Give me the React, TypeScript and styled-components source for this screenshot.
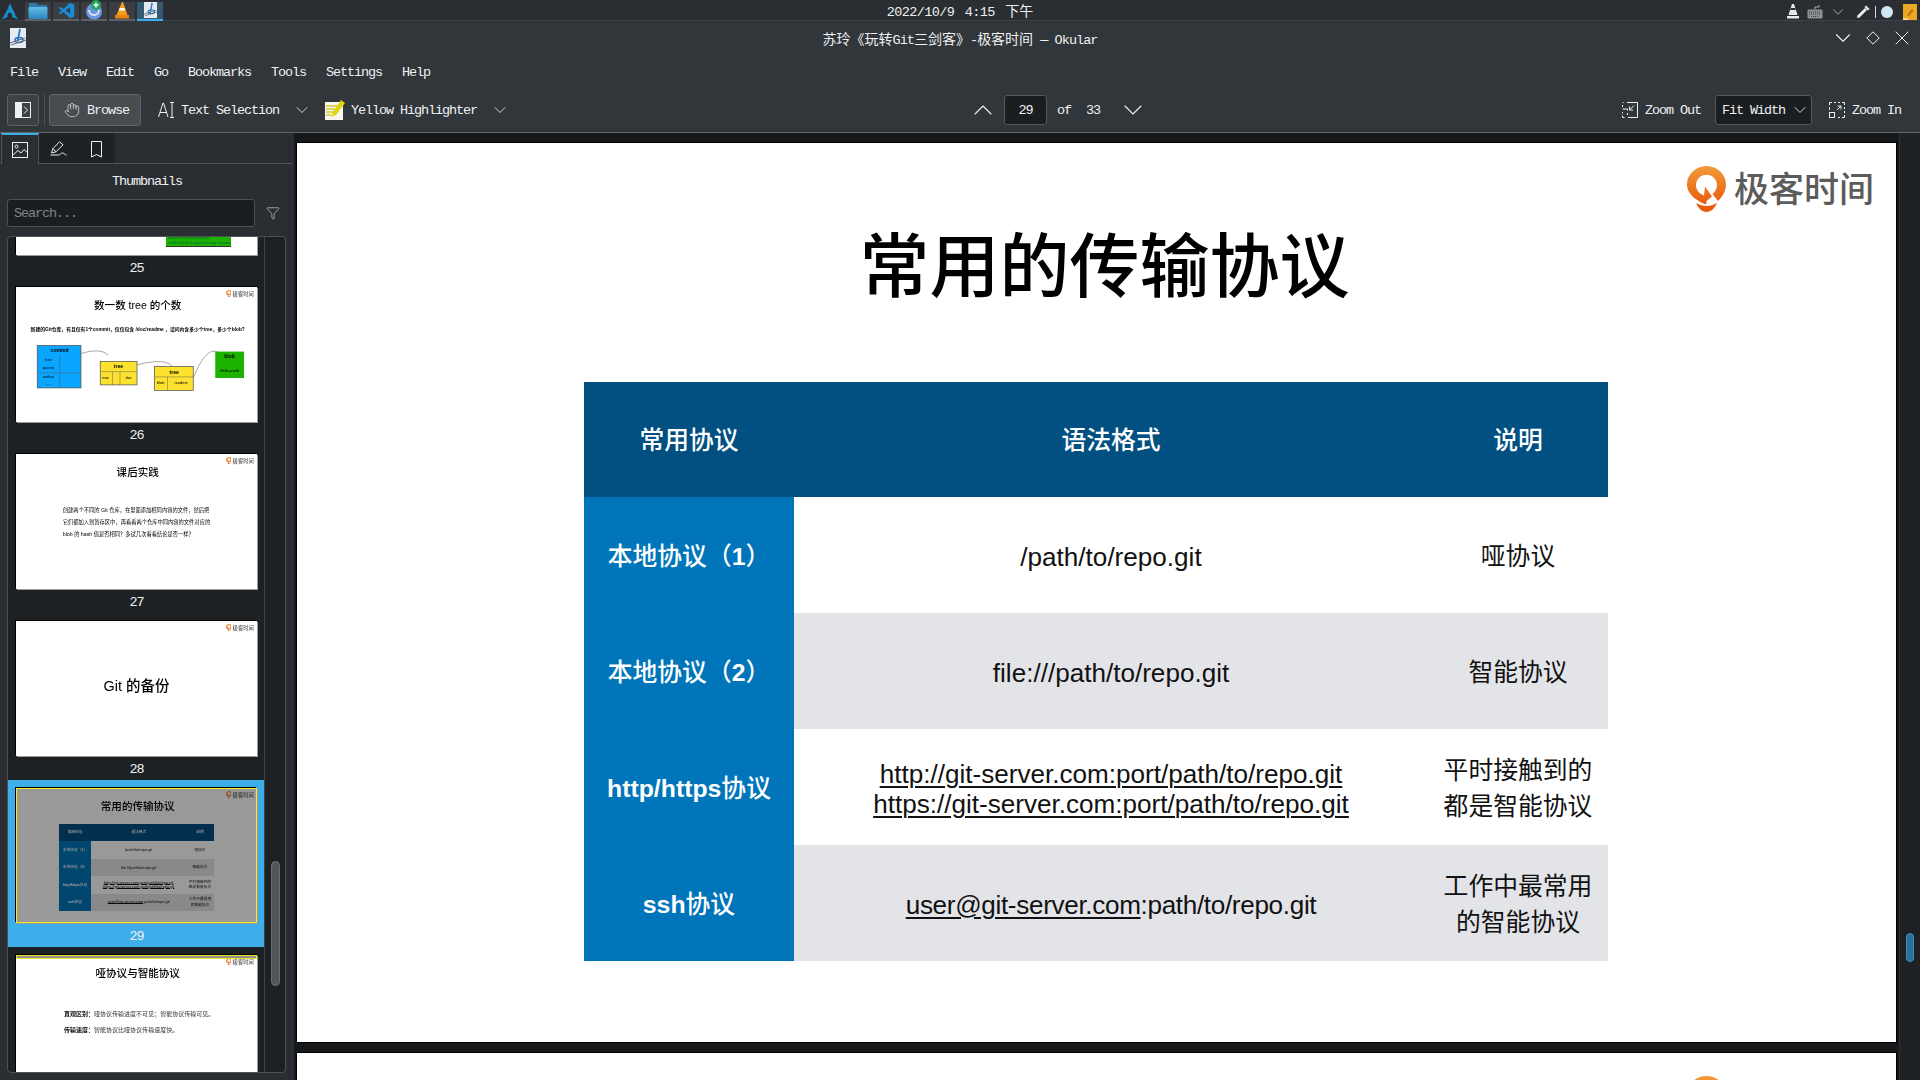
import React from "react";
import styled, { createGlobalStyle } from "styled-components";
import { ChevronDown, ChevronUp, Filter, Hand, X } from "lucide-react";

const uiFont = `"Liberation Mono", "Noto Sans CJK SC", monospace`;
const slideFont = `"Liberation Sans", "Noto Sans CJK SC", sans-serif`;
const THUMB_SCALE = 241 / 1599;

const Global = createGlobalStyle`
  html, body { margin: 0; padding: 0; background: #1b1e20; }
  body { width: 1920px; height: 1080px; overflow: hidden; }
  * { box-sizing: border-box; }
`;

// 画面全体
const Screen = styled.div`
  width: 1920px;
  height: 1080px;
  display: flex;
  flex-direction: column;
  overflow: hidden;
  color: #eff0f1;
  font-family: ${uiFont};
  font-size: 13.5px;
  letter-spacing: -1.1px;
  white-space: nowrap;
`;

const Cjk = styled.span<{ $size?: number }>`
  font-family: "Noto Sans CJK SC", sans-serif;
  font-size: ${(p) => p.$size ?? 14}px;
  letter-spacing: 0;
`;

// 上部パネル
const Panel = styled.header`
  height: 21px;
  flex: none;
  display: grid;
  grid-template-columns: 1fr auto 1fr;
  align-items: center;
  background: #2a2e32;
  border-bottom: 1px solid #3c4146;
`;

const TaskList = styled.div`
  display: flex;
  align-items: center;
  height: 20px;
  padding-left: 2px;
`;

const ArchSlot = styled.div`
  width: 23px;
  height: 20px;
  display: flex;
  align-items: center;
`;

const TaskButton = styled.div<{ $active?: boolean }>`
  width: 26px;
  height: 20px;
  margin-right: 2px;
  display: flex;
  align-items: center;
  justify-content: center;
  background: ${(p) => (p.$active ? "#335a72" : "#3a3e43")};
  border-bottom: 3px solid ${(p) => (p.$active ? "#3daee9" : "#5d6166")};
`;

const Clock = styled.div`
  line-height: 20px;
  letter-spacing: -0.6px;
  word-spacing: 3px;
`;

const Tray = styled.div`
  display: flex;
  align-items: center;
  justify-content: flex-end;
  gap: 9px;
  padding-right: 3px;
  height: 20px;
`;

const TrayPair = styled.div`
  display: flex;
  align-items: center;
  gap: 7px;
  margin-right: -3px;
`;

const TrayRule = styled.span`
  width: 1px;
  height: 12px;
  margin: 0 -4px 0 -5px;
  background: #d5d8da;
`;

const TrayDot = styled.span`
  width: 12px;
  height: 12px;
  margin-right: 1px;
  border-radius: 50%;
  background: #cfe8f5;
`;

// タイトルバー
const TitleBar = styled.div`
  height: 34px;
  flex: none;
  display: grid;
  grid-template-columns: 1fr auto 1fr;
  align-items: center;
  background: #31363b;
  padding: 0 10px;
`;

const TitleText = styled.div`
  letter-spacing: -0.95px;
`;

const WindowButtons = styled.div`
  display: flex;
  justify-content: flex-end;
  align-items: center;
  gap: 10px;
  margin-right: -4px;
`;

// メニュー
const MenuBar = styled.nav`
  height: 34px;
  flex: none;
  display: flex;
  align-items: center;
  gap: 20px;
  padding-left: 10px;
  background: #31363b;
  padding-top: 1px;
`;

// ツールバー
const ToolBar = styled.div`
  height: 44px;
  flex: none;
  display: flex;
  align-items: flex-start;
  padding: 5px 0 0 7px;
  background: #31363b;
  border-bottom: 1px solid #62676b;
`;

const SquareButton = styled.div`
  width: 32px;
  height: 32px;
  display: flex;
  align-items: center;
  justify-content: center;
  background: #3c4146;
  border: 1px solid #5c6166;
  border-radius: 3px;
`;

const ToolRule = styled.span`
  width: 1px;
  height: 32px;
  margin: 0 4px 0 5px;
  background: #4b5055;
`;

const BrowseButton = styled.div`
  width: 92px;
  height: 32px;
  display: flex;
  align-items: center;
  gap: 7px;
  padding-left: 14px;
  background: #474c51;
  border: 1px solid #5f6469;
  border-radius: 3px;
`;

const ToolItem = styled.div<{ $left?: number; $gap?: number }>`
  display: flex;
  align-items: center;
  gap: ${(p) => p.$gap ?? 7}px;
  height: 32px;
  margin-left: ${(p) => p.$left ?? 0}px;
`;

const PageField = styled.div`
  width: 43px;
  height: 30px;
  display: flex;
  align-items: center;
  justify-content: center;
  background: #1b1e20;
  border: 1px solid #54595e;
  border-radius: 3px;
`;

const FitCombo = styled.div`
  width: 97px;
  height: 30px;
  padding: 0 1px 0 6px;
  display: flex;
  align-items: center;
  justify-content: space-between;
  background: #1b1e20;
  border: 1px solid #54595e;
  border-radius: 3px;
`;

// 本体
const Body = styled.div`
  flex: 1;
  min-height: 0;
  display: flex;
`;

const Sidebar = styled.aside`
  width: 294px;
  flex: none;
  display: flex;
  flex-direction: column;
  background: #2a2e32;
`;

const TabRow = styled.div`
  height: 31px;
  flex: none;
  display: flex;
  margin-right: 2px;
  padding-left: 1px;
  border-bottom: 1px solid #50555a;
`;

const SideTab = styled.div<{ $active?: boolean }>`
  width: 38px;
  height: ${(p) => (p.$active ? 31 : 30)}px;
  display: flex;
  align-items: center;
  justify-content: center;
  background: ${(p) => (p.$active ? "#2a2e32" : "#1f2225")};
  border-top: 2px solid ${(p) => (p.$active ? "#3daee9" : "transparent")};
  ${(p) => p.$active && "border-left: 1px solid #50555a; border-right: 1px solid #50555a;"}
`;

const PanelTitle = styled.div`
  height: 35px;
  flex: none;
  display: flex;
  align-items: center;
  justify-content: center;
`;

const SearchRow = styled.div`
  height: 28px;
  flex: none;
  display: flex;
  align-items: center;
  padding-left: 7px;
`;

const SearchBox = styled.div`
  width: 248px;
  height: 28px;
  display: flex;
  align-items: center;
  padding-left: 6px;
  color: #7f8386;
  background: #1b1e20;
  border: 1px solid #4c5156;
  border-radius: 3px;
`;

const FilterSlot = styled.div`
  width: 36px;
  display: flex;
  justify-content: center;
`;

const ThumbFrame = styled.div`
  width: 279px;
  height: 837px;
  flex: none;
  margin: 9px 0 0 7px;
  display: flex;
  overflow: hidden;
  background: #1e2124;
  border: 1px solid #4c5156;
  border-radius: 4px;
`;

const ThumbColumn = styled.div`
  width: 256px;
  flex: none;
  height: 100%;
  overflow: hidden;
`;

const ThumbScroll = styled.div`
  margin-top: -125px;
`;

const ThumbItem = styled.div<{ $selected?: boolean }>`
  height: 167px;
  padding: 8px 0 0 8px;
  background: ${(p) => (p.$selected ? "#3daee9" : "transparent")};
`;

const Thumb = styled.div`
  position: relative;
  width: 241px;
  height: 135px;
  box-shadow: -1px -1px 0 #000, 1px 1px 0 #9a9a9a;
  overflow: hidden;
  filter: blur(0.3px);
`;

const SelectedMark = styled.div`
  position: absolute;
  inset: 0;
  border: 1px solid #f4ee22;
`;

const NextMark = styled.div`
  position: absolute;
  top: 0;
  left: 0;
  right: 0;
  height: 4px;
  background: #8f8f8f;
  border: 1px solid #e8e32a;
`;

const ThumbLabel = styled.div`
  width: 241px;
  height: 24px;
  padding-top: 3px;
  display: flex;
  align-items: center;
  justify-content: center;
`;

const ThumbTrack = styled.div`
  flex: 1;
  position: relative;
  border-left: 1px solid #3e4348;
`;

const ThumbHandle = styled.div`
  position: absolute;
  top: 624px;
  left: 6px;
  width: 9px;
  height: 125px;
  background: #50565b;
  border: 1px solid #6a7075;
  border-radius: 5px;
`;

// 文書ビュー
const DocView = styled.main`
  flex: 1;
  min-width: 0;
  display: flex;
  background: #16181a;
`;

const Pages = styled.div`
  flex: 1;
  height: 100%;
  padding: 10px 3px 0;
  display: flex;
  flex-direction: column;
  gap: 11px;
  overflow: hidden;
`;

const PageBox = styled.div`
  flex: none;
  box-shadow: 0 0 0 1px #000;
`;

const ViewScrollbar = styled.div`
  position: relative;
  width: 21px;
  flex: none;
  background: #1e2124;
  border-left: 1px solid #2d3135;
`;

const ViewHandle = styled.div`
  position: absolute;
  top: 800px;
  left: 6px;
  width: 8px;
  height: 29px;
  background: #2a6f99;
  border: 1px solid #3d8fc0;
  border-radius: 4px;
`;

// スライド
const Sheet = styled.div<{ $scale?: number; $dim?: boolean }>`
  position: relative;
  width: 1599px;
  height: 899px;
  zoom: ${(p) => p.$scale ?? 1};
  display: flex;
  flex-direction: column;
  overflow: hidden;
  background: #fff;
  color: #000;
  font-family: ${slideFont};
  letter-spacing: 0;
  white-space: normal;
  ${(p) => p.$dim && "filter: brightness(0.6);"}
`;

const LogoMark = styled.div`
  position: absolute;
  top: 22px;
  right: 22px;
  display: flex;
  align-items: center;
  gap: 8px;
  color: #5c5c5c;
  font-size: 35px;
  font-weight: 500;
  line-height: 46px;
  white-space: nowrap;
`;

const LogoWords = styled.span`
  padding-top: 2px;
`;

const SlideTitle = styled.h1`
  height: 239px;
  flex: none;
  margin: 0;
  padding: 0 0 2px 16px;
  display: flex;
  align-items: center;
  justify-content: center;
  font-size: 70px;
  font-weight: 500;
`;

const ProtocolGrid = styled.div`
  width: 1024px;
  margin-left: 287px;
  display: grid;
  grid-template-columns: 210px 634px 180px;
  grid-template-rows: 115px 116px 116px 116px 116px;
`;

const Cell = styled.div<{ $tone: "head" | "side" | "plain" | "alt" }>`
  display: flex;
  align-items: center;
  justify-content: center;
  text-align: center;
  padding-top: 3px;
  font-size: 24.8px;
  font-weight: ${(p) => (p.$tone === "head" || p.$tone === "side" ? 500 : 400)};
  line-height: 35.5px;
  color: ${(p) => (p.$tone === "head" || p.$tone === "side" ? "#fff" : "#111")};
  background: ${(p) =>
    p.$tone === "head" ? "#024f81" : p.$tone === "side" ? "#0075b9" : p.$tone === "alt" ? "#e3e4e8" : "#fff"};
`;

const BoldLatin = styled.b`
  font-weight: 700;
`;

const Syntax = styled.div<{ $tight?: boolean }>`
  font-size: 26.1px;
  line-height: 30px;
  letter-spacing: ${(p) => (p.$tight ? "-0.33px" : "0")};
`;

const Linked = styled.span`
  text-decoration: underline;
  text-decoration-thickness: 1.5px;
  text-underline-offset: 3px;
`;

const LeadLine = styled.p<{ $left: number; $top: number }>`
  margin: ${(p) => p.$top}px 0 0 ${(p) => p.$left}px;
  font-size: 35px;
  line-height: 78px;
  width: 1080px;
`;

const Question = styled.p`
  margin: 14px 0 0 0;
  text-align: center;
  font-size: 32px;
  font-weight: 700;
  padding-left: 16px;
`;

const CenterTitle = styled.div`
  flex: 1;
  display: flex;
  align-items: center;
  justify-content: center;
  padding-bottom: 60px;
  font-size: 96px;
  font-weight: 500;
`;

const Statement = styled.p<{ $first?: boolean }>`
  margin: ${(p) => (p.$first ? 131 : 56)}px 0 0 318px;
  font-size: 40px;
  line-height: 50px;
  color: #333;
  b { font-weight: 700; color: #111; }
`;

const GreenNote = styled.div`
  width: 432px;
  height: 440px;
  margin: 403px 0 0 995px;
  padding: 0 0 4px 12px;
  display: flex;
  flex-direction: column;
  justify-content: flex-end;
  background: #1db100;
  border-bottom: 8px solid #333;
  font-size: 26px;
  color: #063;
`;

const Diagram = styled.svg`
  display: block;
  margin-top: 75px;
`;

// アイコン
const Line = { fill: "none", stroke: "#eff0f1", strokeWidth: 1 };

const ArchIcon = () => (
  <svg width="16" height="17" viewBox="0 0 24 24">
    <path d="M12 0C10.900 2.700 10.300 4.400 9 7c.8.900 1.800 1.900 3.400 3-1.700-.7-2.900-1.400-3.800-2.200C6.900 11.400 4.200 16.600 0 24c3.300-1.900 5.800-3.100 8.200-3.500-.1-.4-.2-1-.2-1.500.1-3.300 1.800-5.800 3.900-5.600 2.100.2 3.700 3 3.600 6.300 0 .3-.1.600-.1.800 2.300.5 4.800 1.700 8.600 3.500-.8-1.400-1.500-2.700-2.200-3.900-1.100-.9-2.300-2-4.700-3.200 1.700.4 2.900.9 3.800 1.500C17.500 11.800 15.500 7.500 12 0z" fill="#1793d1" />
  </svg>
);

const FolderIcon = () => (
  <svg width="20" height="17" viewBox="0 0 20 17">
    <defs>
      <linearGradient id="folderFill" x1="0" y1="0" x2="0" y2="1">
        <stop offset="0" stopColor="#63bde8" />
        <stop offset="1" stopColor="#2a86c2" />
      </linearGradient>
    </defs>
    <path d="M1 1h7l2 2h9v3H1z" fill="#2d78ad" />
    <rect x="0.500" y="5" width="19" height="12" rx="1" fill="url(#folderFill)" />
  </svg>
);

const CodeIcon = () => (
  <svg width="17" height="17" viewBox="0 0 24 24">
    <path d="M17 1 7.500 10 3.200 6.700 1 8l3.800 4L1 16l2.200 1.300L7.500 14l9.500 9 6-2.500V3.500zM17 7.500v9L11 12z" fill="#1a8ad4" />
  </svg>
);

const ChatIcon = () => (
  <svg width="18" height="20" viewBox="0 0 18 20">
    <circle cx="9" cy="11.500" r="8" fill="#6a95df" />
    <path d="M4 10a5 5 0 0 0 10 0" fill="none" stroke="#d9e4f6" strokeWidth="2" />
    <circle cx="11" cy="5" r="5" fill="#1fa55b" />
    <path d="M11 2.500v5M8.500 5h5" stroke="#fff" strokeWidth="1.500" />
  </svg>
);

const ConeIcon = () => (
  <svg width="16" height="17" viewBox="0 0 16 17">
    <path d="M8 0h1l4.500 13h-11z" fill="#f4a01e" />
    <path d="M5.700 6h4.600l.8 2.500H4.900z" fill="#fff" />
    <path d="M1 13h14v3.500H1z" fill="#e9820f" />
  </svg>
);

const OkularIcon = ({ size = 16 }: { size?: number }) => (
  <svg width={size} height={size * 1.25} viewBox="0 0 16 20">
    <rect width="16" height="20" fill="#e8ebee" />
    <path d="M10 1 8.500 9 7.500 13" fill="none" stroke="#1f78d8" strokeWidth="1.800" />
    <ellipse cx="9" cy="12" rx="4" ry="2.500" fill="none" stroke="#2c6fc0" strokeWidth="1.400" />
    <path d="M0 15 15 10M1 17 16 12" stroke="#5a6a7a" strokeWidth="1" />
  </svg>
);

const KeyboardIcon = () => (
  <svg width="16" height="14" viewBox="0 0 16 14">
    <path d="M8 4V2h4V0" fill="none" stroke="#a9adb0" />
    <rect x="0.500" y="4.500" width="15" height="9" rx="1" fill="#8d9195" />
    <path d="M2 7h12M2 9h12M4 11.500h8" stroke="#3a3e42" strokeDasharray="1 1" />
  </svg>
);

const TrayConeIcon = () => (
  <svg width="14" height="15" viewBox="0 0 14 15">
    <path d="M6 0h2l3.500 11h-9z" fill="#e6e8ea" />
    <path d="M4.800 4h4.400l.6 2H4.200z" fill="#2a2e32" />
    <path d="M1 12h12v2.500H1z" fill="#e6e8ea" />
  </svg>
);

const DropperIcon = () => (
  <svg width="15" height="15" viewBox="0 0 15 15">
    <path d="M10 1.500 13.500 5 12 6.500 8.500 3z" fill="#eff0f1" />
    <path d="M9 4 1.500 11.500 1 14l2.500-.5L11 6z" fill="#eff0f1" />
  </svg>
);

const StickyIcon = () => (
  <svg width="14" height="16" viewBox="0 0 14 16">
    <rect width="14" height="16" fill="#eba823" />
    <path d="M4 11 9 5l1.500 1.500L5.500 12.500z" fill="#c66d10" />
    <path d="M0 14h5v2H0z" fill="#f6d987" />
  </svg>
);

const Diamond = () => (
  <svg width="14" height="14" viewBox="0 0 14 14">
    <path d="M7 .8 13.200 7 7 13.200 .8 7z" {...Line} />
  </svg>
);

const PanelToggleIcon = () => (
  <svg width="16" height="16" viewBox="0 0 16 16">
    <rect x="0" y="0" width="7" height="16" fill="#eff0f1" />
    <rect x="0.500" y="0.500" width="15" height="15" {...Line} />
    <path d="M9 4.500 12.500 8 9 11.500" {...Line} />
  </svg>
);

const TextToolIcon = () => (
  <svg width="16" height="16" viewBox="0 0 16 16">
    <path d="M0.500 15 5 1h.500l4.500 14M2 10.500h6.500" {...Line} />
    <path d="M12 .5h4M12 15.500h4M14 .5v15" {...Line} />
  </svg>
);

const HighlighterIcon = () => (
  <svg width="20" height="20" viewBox="0 0 20 20">
    <rect y="2" width="18" height="18" fill="#f6f6ee" />
    <path d="M1 6h12M1 9h9M1 12h7M1 15h5" stroke="#d8c92a" strokeWidth="1.500" />
    <path d="M16 0 20 3 11 15 6 17l2-5z" fill="#dfd60e" />
  </svg>
);

const ZoomOutIcon = () => (
  <svg width="16" height="16" viewBox="0 0 16 16">
    <path d="M5 .5h10.500v15H6" {...Line} />
    <path d="M.5 .5h1M.5 3v2M.5 7h5v1.500M5.500 11v2M.5 10v1.500M.5 13.500v2h2" {...Line} />
    <path d="M12 3.500 7.500 8M7.500 4.500V8H11" {...Line} />
  </svg>
);

const ZoomInIcon = () => (
  <svg width="16" height="16" viewBox="0 0 16 16">
    <path d="M.5 8V5M.5 3V.5H3M5 .5h2M9 .5h2M13 .5h2.500V3M15.500 5v2M15.500 9v2M15.500 13v2.500H13M11 15.500H9" {...Line} />
    <rect x="0.500" y="10.500" width="5" height="5" {...Line} />
    <path d="M8 8 12 4M8.500 4H12v3.500" {...Line} />
  </svg>
);

const ImageTabIcon = () => (
  <svg width="16" height="16" viewBox="0 0 16 16">
    <rect x="0.500" y="0.500" width="15" height="15" {...Line} />
    <circle cx="4.500" cy="4.500" r="1.500" {...Line} />
    <path d="M1 13 6 8.500 9 11 12 7.500 15.500 10.500" {...Line} />
  </svg>
);

const PenTabIcon = () => (
  <svg width="17" height="16" viewBox="0 0 17 16">
    <path d="M9.500 .8 13 3.800 6 10.800 1.500 12 3 7.500z" {...Line} />
    <path d="M3 7.500 6 10.800" {...Line} />
    <path d="M.5 14h8c2 0 2-2 4-2s2 2 4 2" {...Line} />
  </svg>
);

const BookmarkIcon = () => (
  <svg width="11" height="17" viewBox="0 0 11 17">
    <path d="M.5 .5h10V16l-5-2.500-5 2.500z" {...Line} />
  </svg>
);

const GeekLogoIcon = () => (
  <svg width="39" height="46" viewBox="0 0 39 46">
    <defs>
      <linearGradient id="geekFill" x1="0" y1="0" x2="0" y2="1">
        <stop offset="0" stopColor="#f29a3a" />
        <stop offset="1" stopColor="#e85c0c" />
      </linearGradient>
    </defs>
    <path
      d="M19.500 0C30.300 0 39 8.300 39 18.500c0 7-4 12.500-8 16.500l-5.500-7c2.500-2 4.500-5 4.500-9 0-5.800-4.700-10.300-10.500-10.300S9 13.200 9 19c0 5.200 3.800 9 8 10.500l1-9 7 10-5.500 4.500c0 2-.2 3.500-.5 3.500C12 36 0 29 0 18.500 0 8.300 8.700 0 19.500 0z"
      fill="url(#geekFill)"
    />
    <path d="M9 37c7 4 14 4 21 0-2 5-6 9-10.500 9S11 42 9 37z" fill="#e85c0c" />
  </svg>
);

const Logo = () => (
  <LogoMark>
    <GeekLogoIcon />
    <LogoWords>极客时间</LogoWords>
  </LogoMark>
);

// スライド本体
const ProtocolSlide = ({ scale, dim }: { scale?: number; dim?: boolean }) => (
  <Sheet $scale={scale} $dim={dim}>
    <Logo />
    <SlideTitle>常用的传输协议</SlideTitle>
    <ProtocolGrid>
      <Cell $tone="head">常用协议</Cell>
      <Cell $tone="head">语法格式</Cell>
      <Cell $tone="head">说明</Cell>

      <Cell $tone="side">本地协议（<BoldLatin>1</BoldLatin>）</Cell>
      <Cell $tone="plain"><Syntax>/path/to/repo.git</Syntax></Cell>
      <Cell $tone="plain">哑协议</Cell>

      <Cell $tone="side">本地协议（<BoldLatin>2</BoldLatin>）</Cell>
      <Cell $tone="alt"><Syntax>file:///path/to/repo.git</Syntax></Cell>
      <Cell $tone="alt">智能协议</Cell>

      <Cell $tone="side"><BoldLatin>http/https</BoldLatin>协议</Cell>
      <Cell $tone="plain">
        <Syntax>
          <Linked>http://git-server.com:port/path/to/repo.git</Linked>
          <br />
          <Linked>https://git-server.com:port/path/to/repo.git</Linked>
        </Syntax>
      </Cell>
      <Cell $tone="plain">平时接触到的<br />都是智能协议</Cell>

      <Cell $tone="side"><BoldLatin>ssh</BoldLatin>协议</Cell>
      <Cell $tone="alt">
        <Syntax $tight><Linked>user@git-server.com</Linked>:path/to/repo.git</Syntax>
      </Cell>
      <Cell $tone="alt">工作中最常用<br />的智能协议</Cell>
    </ProtocolGrid>
  </Sheet>
);

const TreeDiagram = () => (
  <Diagram width="1599" height="420" viewBox="0 370 1599 420" fontFamily="Liberation Sans, sans-serif">
    <path d="M431 440C500 420 570 410 610 450" fill="none" stroke="#888" strokeWidth="5" />
    <path d="M803 515C860 500 990 470 1040 525" fill="none" stroke="#888" strokeWidth="5" />
    <path d="M1176 600C1220 500 1270 400 1340 430" fill="none" stroke="#888" strokeWidth="5" />

    <rect x="141" y="387" width="290" height="281" fill="#0aa5ff" stroke="#555" strokeWidth="5" />
    <path d="M141 568H431M290 450V668" stroke="#555" strokeWidth="3" />
    <text x="290" y="430" fontSize="34" fontWeight="700" textAnchor="middle">commit</text>
    <text x="215" y="490" fontSize="26" textAnchor="middle">tree</text>
    <text x="215" y="545" fontSize="26" textAnchor="middle">parent</text>
    <text x="215" y="600" fontSize="26" textAnchor="middle">author</text>
    <text x="215" y="650" fontSize="26" textAnchor="middle">.....</text>

    <rect x="559" y="493" width="244" height="155" fill="#fce22f" stroke="#555" strokeWidth="5" />
    <path d="M559 560H803M640 560V648M690 560V648" stroke="#555" strokeWidth="3" />
    <text x="680" y="535" fontSize="34" fontWeight="700" textAnchor="middle">tree</text>
    <text x="595" y="610" fontSize="26" textAnchor="middle">tree</text>
    <text x="748" y="610" fontSize="26" textAnchor="middle">doc</text>

    <rect x="918" y="526" width="258" height="159" fill="#fce22f" stroke="#555" strokeWidth="5" />
    <path d="M918 595H1176M1005 595V685" stroke="#555" strokeWidth="3" />
    <text x="1050" y="575" fontSize="34" fontWeight="700" textAnchor="middle">tree</text>
    <text x="960" y="645" fontSize="26" textAnchor="middle">blob</text>
    <text x="1095" y="645" fontSize="26" textAnchor="middle">readme</text>

    <rect x="1322" y="427" width="191" height="175" fill="#1db100" />
    <text x="1417" y="470" fontSize="34" fontWeight="700" textAnchor="middle">blob</text>
    <text x="1417" y="560" fontSize="26" textAnchor="middle">Hello,world</text>
  </Diagram>
);

type SideItem = { page: number; slide: React.ReactNode; selected?: boolean; next?: boolean };

const sideItems: SideItem[] = [
  {
    page: 25,
    slide: (
      <Sheet $scale={THUMB_SCALE}>
        <GreenNote>
          <div>index.html,utf8&amp;syntrah.</div>
          <div>w2dfc7bb6fc4.oog.pktxx.oqc.oqoooo</div>
        </GreenNote>
      </Sheet>
    ),
  },
  {
    page: 26,
    slide: (
      <Sheet $scale={THUMB_SCALE}>
        <Logo />
        <SlideTitle>数一数 tree 的个数</SlideTitle>
        <Question>新建的Git仓库，有且仅有1个commit，仅仅包含 /doc/readme ，请问内含多少个tree，多少个blob?</Question>
        <TreeDiagram />
      </Sheet>
    ),
  },
  {
    page: 27,
    slide: (
      <Sheet $scale={THUMB_SCALE}>
        <Logo />
        <SlideTitle>课后实践</SlideTitle>
        <LeadLine $left={310} $top={100}>
          创建两个不同的 Git 仓库，在里面添加相同内容的文件，然后把
          <br />
          它们都加入到暂存区中，再看看两个仓库中同内容的文件对应的
          <br />
          blob 的 hash 值是否相同？多试几次看看结论是否一样？
        </LeadLine>
      </Sheet>
    ),
  },
  {
    page: 28,
    slide: (
      <Sheet $scale={THUMB_SCALE}>
        <Logo />
        <CenterTitle>Git 的备份</CenterTitle>
      </Sheet>
    ),
  },
  { page: 29, selected: true, slide: <ProtocolSlide scale={THUMB_SCALE} dim /> },
  {
    page: 30,
    next: true,
    slide: (
      <Sheet $scale={THUMB_SCALE}>
        <Logo />
        <SlideTitle>哑协议与智能协议</SlideTitle>
        <Statement $first><b>直观区别：</b>哑协议传输进度不可见；智能协议传输可见。</Statement>
        <Statement><b>传输速度：</b>智能协议比哑协议传输速度快。</Statement>
      </Sheet>
    ),
  },
];

const menuNames = ["File", "View", "Edit", "Go", "Bookmarks", "Tools", "Settings", "Help"];

const App = () => {
  return (
    <Screen>
      <Global />

      {/* パネル */}
      <Panel>
        <TaskList>
          <ArchSlot><ArchIcon /></ArchSlot>
          <TaskButton><FolderIcon /></TaskButton>
          <TaskButton><CodeIcon /></TaskButton>
          <TaskButton><ChatIcon /></TaskButton>
          <TaskButton><ConeIcon /></TaskButton>
          <TaskButton $active><OkularIcon size={13} /></TaskButton>
        </TaskList>
        <Clock>2022/10/9 4:15 <Cjk>下午</Cjk></Clock>
        <Tray>
          <TrayPair>
            <TrayConeIcon />
            <KeyboardIcon />
          </TrayPair>
          <ChevronDown size={18} strokeWidth={1} color="#c8cbcd" />
          <DropperIcon />
          <TrayRule />
          <TrayDot />
          <StickyIcon />
        </Tray>
      </Panel>

      {/* タイトルバー */}
      <TitleBar>
        <OkularIcon />
        <TitleText>
          <Cjk>苏玲《玩转</Cjk>Git<Cjk>三剑客》</Cjk>-<Cjk>极客时间</Cjk> — Okular
        </TitleText>
        <WindowButtons>
          <ChevronDown size={26} strokeWidth={1} />
          <Diamond />
          <X size={24} strokeWidth={1} />
        </WindowButtons>
      </TitleBar>

      <MenuBar>
        {menuNames.map((name) => (
          <span key={name}>{name}</span>
        ))}
      </MenuBar>

      {/* ツールバー */}
      <ToolBar>
        <SquareButton><PanelToggleIcon /></SquareButton>
        <ToolRule />
        <BrowseButton>
          <Hand size={16} strokeWidth={1} />
          Browse
        </BrowseButton>
        <ToolItem $left={17}><TextToolIcon />Text Selection</ToolItem>
        <ToolItem $left={13}><ChevronDown size={20} strokeWidth={1} /></ToolItem>
        <ToolItem $left={13} $gap={6}><HighlighterIcon />Yellow Highlighter</ToolItem>
        <ToolItem $left={13}><ChevronDown size={20} strokeWidth={1} /></ToolItem>
        <ToolItem $left={457}><ChevronUp size={32} strokeWidth={0.8} /></ToolItem>
        <ToolItem $left={5}><PageField>29</PageField></ToolItem>
        <ToolItem $left={10}>of</ToolItem>
        <ToolItem $left={15}>33</ToolItem>
        <ToolItem $left={17}><ChevronDown size={32} strokeWidth={0.8} /></ToolItem>
        <ToolItem $left={473}><ZoomOutIcon />Zoom Out</ToolItem>
        <ToolItem $left={14}>
          <FitCombo>Fit Width<ChevronDown size={20} strokeWidth={1} /></FitCombo>
        </ToolItem>
        <ToolItem $left={17}><ZoomInIcon />Zoom In</ToolItem>
      </ToolBar>

      <Body>
        {/* サイドバー */}
        <Sidebar>
          <TabRow>
            <SideTab $active><ImageTabIcon /></SideTab>
            <SideTab><PenTabIcon /></SideTab>
            <SideTab><BookmarkIcon /></SideTab>
          </TabRow>
          <PanelTitle>Thumbnails</PanelTitle>
          <SearchRow>
            <SearchBox>Search...</SearchBox>
            <FilterSlot><Filter size={14} strokeWidth={1} /></FilterSlot>
          </SearchRow>
          <ThumbFrame>
            <ThumbColumn>
              <ThumbScroll>
                {sideItems.map((item) => (
                  <ThumbItem key={item.page} $selected={item.selected}>
                    <Thumb>
                      {item.slide}
                      {item.selected && <SelectedMark />}
                      {item.next && <NextMark />}
                    </Thumb>
                    <ThumbLabel>{item.page}</ThumbLabel>
                  </ThumbItem>
                ))}
              </ThumbScroll>
            </ThumbColumn>
            <ThumbTrack><ThumbHandle /></ThumbTrack>
          </ThumbFrame>
        </Sidebar>

        {/* 文書 */}
        <DocView>
          <Pages>
            <PageBox><ProtocolSlide /></PageBox>
            <PageBox><Sheet><Logo /></Sheet></PageBox>
          </Pages>
          <ViewScrollbar><ViewHandle /></ViewScrollbar>
        </DocView>
      </Body>
    </Screen>
  );
};

export default App;
